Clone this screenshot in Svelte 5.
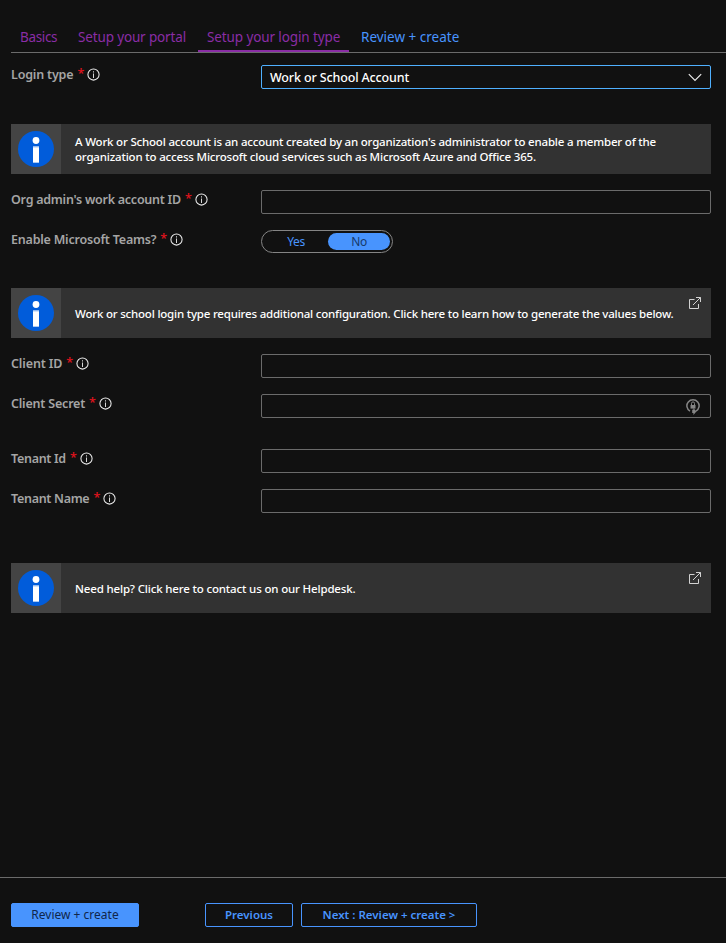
<script>
  const tabs = [
    { text: 'Basics', w: 37, cls: 'visited t1' },
    { text: 'Setup your portal', w: 108, cls: 'visited t2' },
    { text: 'Setup your login type', w: 133, cls: 'visited active' },
    { text: 'Review + create', w: 98, cls: '' }
  ];
</script>

{#snippet label(text, cls)}
  <div class="label"><span class={cls}>{text}</span><b>*</b>
    <svg width="13" height="13" viewBox="0 0 13 13"><circle cx="6.5" cy="6.5" r="5.6" fill="none" stroke="#ececec" stroke-width="1.05" /><path d="M6 5.5h1V10H6zM6 3.3h1v1.2H6z" fill="#d8d8d8" /></svg>
  </div>
{/snippet}

{#snippet badge()}
  <div class="badge">
    <svg width="36" height="36" viewBox="0 0 36 36"><circle cx="18" cy="18" r="18" fill="#015cda" /><circle cx="18" cy="9.5" r="3.4" fill="#fff" /><path d="M15 15.5h6V32h-6z" fill="#fff" /><path d="M15 15.5h6v1h-6zM15 31h6v1h-6z" fill="#a9c9f5" /></svg>
  </div>
{/snippet}

{#snippet external()}
  <svg class="external" width="14" height="14" viewBox="0 0 14 14" fill="none" stroke="#d2d2d2"><path d="M6.5 3.5h-5v9h9V8M5 9l7.5-7.5M8 1.5h4.5V6" /></svg>
{/snippet}

<main>
  <nav>
    {#each tabs as tab}
      <a class={tab.cls} style="width:{tab.w}px"><span>{tab.text}</span></a>
    {/each}
  </nav>

  <section class="row first">
    {@render label('Login type', 'l-login')}
    <div class="box select"><span>Work or School Account</span>
      <svg width="14" height="9" viewBox="0 0 14 9"><path d="M.8 1.2 7 7.4l6.2-6.2" fill="none" stroke="#ededed" stroke-width="1.15" /></svg>
    </div>
  </section>

  <section class="notice n1">
    {@render badge()}
    <div class="message"><p class="m1">A Work or School account is an account created by an organization's administrator to enable a member of the</p><p class="m2">organization to access Microsoft cloud services such as Microsoft Azure and Office 365.</p></div>
  </section>

  <section class="row">
    {@render label("Org admin's work account ID", 'l-org')}
    <div class="box"></div>
  </section>
  <section class="row">
    {@render label('Enable Microsoft Teams?', 'l-teams')}
    <div class="toggle"><span>Yes</span><span class="on">No</span></div>
  </section>

  <section class="notice n2">
    {@render badge()}
    <div class="message"><p class="m3">Work or school login type requires additional configuration. Click here to learn how to generate the values below.</p></div>
    {@render external()}
  </section>

  <section class="row">
    {@render label('Client ID', 'l-client')}
    <div class="box"></div>
  </section>
  <section class="row secret">
    {@render label('Client Secret', 'l-secret')}
    <div class="box">
      <svg width="14" height="17" viewBox="0 0 14 17"><path d="M4 13.2A6.1 6.1 0 1 1 10 13.2" fill="none" stroke="#858585" stroke-width="1.5" /><path d="M4.5 7h5v3.6h-5z" fill="#858585" /><path d="M5.5 7V5.4a1.5 1.5 0 0 1 3 0V7" fill="none" stroke="#858585" stroke-width="1" /><path d="M6.2 11.8h1.2V10l3 3.6L7.4 17v-2H6.2z" fill="#858585" /></svg>
    </div>
  </section>
  <section class="row">
    {@render label('Tenant Id', 'l-tid')}
    <div class="box"></div>
  </section>
  <section class="row">
    {@render label('Tenant Name', 'l-tname')}
    <div class="box"></div>
  </section>

  <section class="notice n3">
    {@render badge()}
    <div class="message"><p class="m4">Need help? Click here to contact us on our Helpdesk.</p></div>
    {@render external()}
  </section>

  <footer>
    <button class="primary"><span>Review + create</span></button>
    <button class="prev"><span>Previous</span></button>
    <button class="next"><span>Next : Review + create &gt;</span></button>
  </footer>
</main>

<style>
  :global(body) { background: #111; }
  main { box-sizing: border-box; width: 726px; height: 943px; display: flex; flex-direction: column; background: #111; color: #fff; font-family: "Noto Sans", "Open Sans", sans-serif; font-size: 12px; overflow: hidden; }
  span, p { white-space: nowrap; }
  svg { flex: none; }
  nav { box-sizing: border-box; height: 53px; flex: none; margin-left: 11px; padding-top: 24px; border-bottom: 1px solid #6b6b6b; display: flex; gap: 3px; }
  nav a { box-sizing: content-box; height: 26px; padding: 0 9px; line-height: 27px; font-size: 13.5px; color: #4894fe; border-bottom: 2px solid transparent; }
  nav a.visited { color: #8a2da5; }
  nav a.active { border-color: #8a2da5; letter-spacing: -.11px; }
  nav a.t1 { letter-spacing: -.35px; }
  nav a.t2 { letter-spacing: -.15px; }
  .row { display: flex; flex: none; height: 24px; margin: 0 15px 16px 11px; }
  .first { margin-top: 12px; margin-bottom: 35px; }
  .secret { margin-bottom: 31px; }
  .label { width: 250px; height: 19px; display: flex; align-items: center; font-size: 12.5px; font-weight: 600; color: #a5a5a5; }
  .label b { margin: 0 3px 0 4px; padding-bottom: 2px; color: #e1131d; font-weight: 500; }
  .l-login { letter-spacing: -.18px; }
  .l-org { letter-spacing: -.25px; }
  .l-teams { letter-spacing: -.21px; }
  .l-client { letter-spacing: -.12px; }
  .l-secret { letter-spacing: -.2px; }
  .l-tid { letter-spacing: -.3px; }
  .l-tname { letter-spacing: -.3px; }
  .box { box-sizing: border-box; flex: 1; display: flex; align-items: center; justify-content: flex-end; height: 24px; border: 1px solid #6b6b6b; border-radius: 2px; padding-right: 10px; }
  .select { justify-content: space-between; border-color: #4fb0ff; padding: 0 8px; font-size: 12.5px; font-weight: 500; letter-spacing: -.14px; }
  .toggle { box-sizing: border-box; display: flex; width: 132px; height: 23px; border: 1px solid #858585; border-radius: 12px; padding: 2px; color: #4894fe; line-height: 18px; text-align: center; letter-spacing: -.4px; }
  .toggle span { width: 64px; height: 17px; }
  .toggle .on { width: 62px; background: #4894fe; color: #173a6b; border-radius: 9px; }
  .notice { display: flex; flex: none; align-items: center; height: 50px; margin: 0 15px 16px 11px; background: #323232; }
  .n2 { margin-top: 18px; }
  .n3 { margin-top: 34px; }
  .badge { flex: none; width: 50px; height: 50px; display: flex; align-items: center; justify-content: center; background: #444; }
  .message { flex: 1; min-width: 0; margin-left: 14px; line-height: 15px; font-size: 11.5px; font-weight: 500; }
  p { margin: 0; }
  .m1 { letter-spacing: -.19px; }
  .m2 { letter-spacing: -.18px; }
  .m3 { letter-spacing: -.2px; }
  .m4 { letter-spacing: -.16px; }
  .external { align-self: flex-start; margin: 8px 9px 0 0; }
  footer { box-sizing: border-box; display: flex; height: 66px; margin-top: auto; padding: 25px 0 0 11px; border-top: 1px solid #6b6b6b; }
  button { box-sizing: border-box; height: 24px; padding: 0; border: 1px solid #4894fe; border-radius: 2px; background: none; color: #4894fe; font: 600 11.5px/20px "Noto Sans", "Open Sans", sans-serif; }
  .primary { width: 128px; background: #4894fe; color: #10264a; font-size: 12px; font-weight: 400; }
  .prev { width: 88px; margin-left: 66px; }
  .next { width: 176px; margin-left: 8px; }
</style>
